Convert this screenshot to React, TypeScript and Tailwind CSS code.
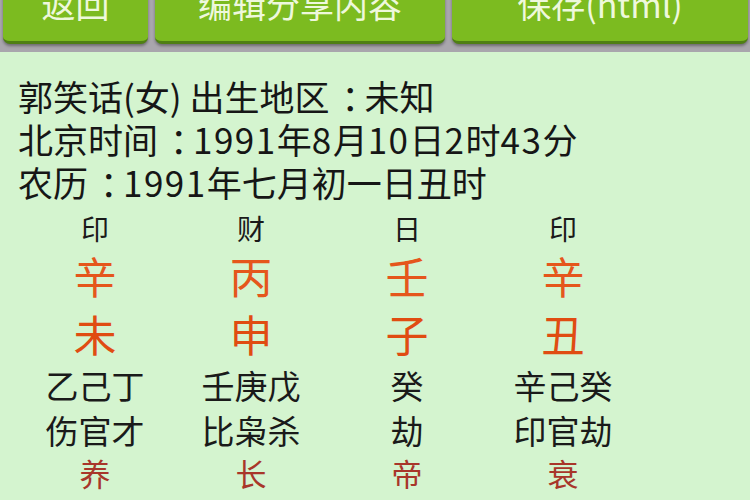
const font = { fontFamily: '"Noto Sans CJK SC", Roboto, sans-serif' };

const pillars = [
  { god: '印', stem: '辛', branch: '未', hidden: '乙己丁', gods: '伤官才', stage: '养' },
  { god: '财', stem: '丙', branch: '申', hidden: '壬庚戊', gods: '比枭杀', stage: '长' },
  { god: '日', stem: '壬', branch: '子', hidden: '癸', gods: '劫', stage: '帝' },
  { god: '印', stem: '辛', branch: '丑', hidden: '辛己癸', gods: '印官劫', stage: '衰' },
];

function TopButton({ label, className }: { label: string; className: string }) {
  return (
    <div
      className={`${className} h-[64px] rounded-b-[7px] bg-[#7cbb20] border-b-[3px] border-[#4f7f14] shadow-[0_2px_3px_rgba(0,0,0,0.35)] flex items-start justify-center pt-[4px] text-[34px] leading-[40px] text-[#eef8dc]`}
    >
      {label}
    </div>
  );
}

// full-width colon drawn centred in its box, as on the device
const Colon = () => <span className="inline-block w-[1em] pl-[12px]">：</span>;
const Num = ({ children }: { children: string }) => <span className="tracking-[1.5px]">{children}</span>;

export default function App() {
  return (
    <div className="w-[750px] h-[500px] overflow-hidden bg-[#d4f4cf]" style={font}>
      <div className="bg-[#a9a6ad] h-[52px] flex pl-[3px] pr-[2px] items-start">
        <div className="flex w-full gap-[7px] -mt-[20px]">
          <TopButton label="返回" className="w-[145px]" />
          <TopButton label="编辑分享内容" className="w-[290px]" />
          <TopButton label="保存(html)" className="flex-1" />
        </div>
      </div>

      <div className="pl-[18px] pt-[22px] text-[35px] leading-[43px] text-[#161616] whitespace-nowrap">
        <div>
          郭笑话(女) 出生地区<Colon />未知
        </div>
        <div>
          北京时间<Colon />
          <Num>1991</Num>年<Num>8</Num>月<Num>10</Num>日<Num>2</Num>时<Num>43</Num>分
        </div>
        <div>
          农历<Colon />
          <Num>1991</Num>年七月初一日丑时
        </div>
      </div>

      <div className="ml-[17px] mt-[3px] grid grid-cols-[156px_156px_156px_156px] text-center">
        {pillars.map((p, i) => (
          <div key={i} className="flex flex-col items-center">
            <div className="text-[28px] leading-[44px] text-[#1a1a1a]">{p.god}</div>
            <div className="text-[43px] leading-[50px] text-[#e5561c]">{p.stem}</div>
            <div className="text-[43px] leading-[50px] mt-[8px] text-[#e04c12]">{p.branch}</div>
            <div className="text-[33px] leading-[46px] mt-[4px] text-[#1a1a1a]">{p.hidden}</div>
            <div className="text-[33px] leading-[44px] text-[#1a1a1a]">{p.gods}</div>
            <div className="text-[31px] leading-[42px] text-[#a8362a]">{p.stage}</div>
            <div className="text-[31px] leading-[44px] text-[#1a1a1a]">{p.hidden}</div>
          </div>
        ))}
      </div>
    </div>
  );
}
